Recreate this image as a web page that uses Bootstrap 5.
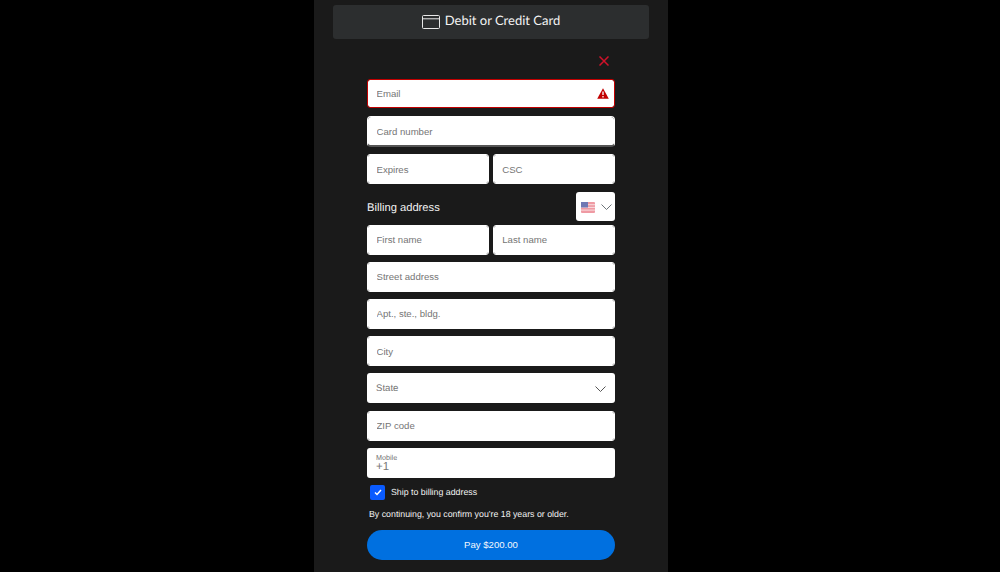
<!DOCTYPE html>
<html lang="en">
<head>
<meta charset="utf-8">
<title>Checkout</title>
<link href="https://cdn.jsdelivr.net/npm/bootstrap@5.3.0/dist/css/bootstrap.min.css" rel="stylesheet">
<style>
html,body{height:572px;overflow:hidden;background:#000;font-family:"Liberation Sans",Arial,sans-serif;text-rendering:geometricPrecision}
.pay-panel{width:354px;height:572px;margin-left:314px;background:#1a1a1a;padding:5px 19px 0}
.card-head{height:34px;background:#2c2e2f;border-radius:3px;color:#f4f4f4;font-family:"Lato",sans-serif;font-size:13px;gap:5px}
.head-label{margin-top:-2px}
.close-row{height:40px;padding-right:40px;padding-top:3px}
.pay-form{width:248px;margin-left:34px}
.field.form-control{height:30px;border-radius:3px;border:1px solid #fff;padding:0 8.500px;font-size:9.600px;color:#333;margin-bottom:7.300px;box-shadow:none}
.field.form-control::placeholder{color:#757575;opacity:1}
.field-err.form-control{height:29px;border-color:#c20000;padding-right:28px}
.field-dark.form-control{height:31px;border-bottom:2px solid #555;border-radius:4px;margin-bottom:7px}
.wrap-err{margin-bottom:8px}
.wrap-err .field{margin-bottom:0}
.err-icon{position:absolute;right:6px;top:9px}
.two-up{gap:3.500px}
.two-up .field{margin-bottom:7.500px}
.two-up.name-row .field{margin-bottom:7.100px}
.bill-row{height:29px;margin-bottom:4px}
.bill-title{color:#f2f2f2;font-size:11.200px;padding-top:4px}
.flag-pick{width:39px;height:29px;background:#fff;border-radius:3px;gap:6px;padding:3px 0 0 5px}
.select-box{height:30px;background:#fff;border-radius:3px;padding:2px 9px 0;font-size:9.600px;color:#757575;margin-bottom:7.300px}
.mobile-box{height:30px;background:#fff;border-radius:3px;padding:6px 9px 0;color:#757575;margin-bottom:7px}
.mobile-label{font-size:7.200px;line-height:8px}
.mobile-val{font-size:11.500px;line-height:11px}
.ship-row{padding-left:3px;gap:6px;height:15px;color:#f2f2f2;font-size:8.800px}
.ship-check{width:15px;height:15px;background:#0a5bff;border-radius:2px}
.legal{color:#f2f2f2;font-size:8.800px;padding-left:2px;margin:9px 0 10px;line-height:11px}
.pay-btn.btn{height:30px;width:100%;padding:0;background:#0070e0;border:0;border-radius:15px;color:#f4f8fd;font-size:9.600px}
</style>
</head>
<body>
<div class="pay-panel">
  <div class="card-head d-flex align-items-center justify-content-center">
    <svg width="18" height="14" viewBox="0 0 18 14" fill="none" stroke="#e8e8e8" stroke-width="1"><rect x=".5" y=".5" width="17" height="13" rx="1"/><path d="M.5 3.800h17"/></svg>
    <span class="head-label">Debit or Credit Card</span>
  </div>
  <div class="close-row d-flex align-items-center justify-content-end">
    <svg width="10" height="10" viewBox="0 0 10 10" stroke="#d0122a" stroke-width="1.500"><path d="M.5.500l9 9M9.500.500l-9 9"/></svg>
  </div>
  <form class="pay-form">
    <div class="position-relative wrap-err">
      <input class="form-control field field-err" placeholder="Email">
      <svg class="err-icon" width="12" height="11" viewBox="0 0 12 11"><path d="M6 .3L11.800 10.700H.2z" fill="#c20000"/><path d="M6 3.500v3.600M6 8v1.400" stroke="#fff" stroke-width="1.300"/></svg>
    </div>
    <input class="form-control field field-dark" placeholder="Card number">
    <div class="d-flex two-up">
      <input class="form-control field" placeholder="Expires">
      <input class="form-control field" placeholder="CSC">
    </div>
    <div class="d-flex align-items-center justify-content-between bill-row">
      <span class="bill-title">Billing address</span>
      <div class="flag-pick d-flex align-items-center">
        <svg width="14" height="11" viewBox="0 0 14 11"><rect width="14" height="11" rx="1" fill="#ef9aa3"/><path d="M0 2.700h14M0 5.400h14M0 8.100h14" stroke="#f8e4e6" stroke-width=".9"/><rect width="7" height="5.500" fill="#7079b4"/></svg>
        <svg width="11" height="7" viewBox="0 0 11 7" fill="none" stroke="#6c7378" stroke-width="1"><path d="M.5.500l5 5 5-5"/></svg>
      </div>
    </div>
    <div class="d-flex two-up name-row">
      <input class="form-control field" placeholder="First name">
      <input class="form-control field" placeholder="Last name">
    </div>
    <input class="form-control field" placeholder="Street address">
    <input class="form-control field" placeholder="Apt., ste., bldg.">
    <input class="form-control field" placeholder="City">
    <div class="select-box d-flex align-items-center justify-content-between">
      <span>State</span>
      <svg width="11" height="7" viewBox="0 0 11 7" fill="none" stroke="#555" stroke-width="1"><path d="M.5.500l5 5 5-5"/></svg>
    </div>
    <input class="form-control field" placeholder="ZIP code">
    <div class="mobile-box">
      <div class="mobile-label">Mobile</div>
      <div class="mobile-val">+1</div>
    </div>
    <div class="ship-row d-flex align-items-center">
      <span class="ship-check d-flex align-items-center justify-content-center">
        <svg width="8" height="7" viewBox="0 0 8 7" fill="none" stroke="#fff" stroke-width="1.500"><path d="M1 3.500l2 2 4-4.500"/></svg>
      </span>
      <span>Ship to billing address</span>
    </div>
    <p class="legal">By continuing, you confirm you're 18 years or older.</p>
    <button type="button" class="btn pay-btn">Pay $200.00</button>
  </form>
</div>
<script src="https://cdn.jsdelivr.net/npm/bootstrap@5.3.0/dist/js/bootstrap.bundle.min.js"></script>
</body>
</html>
